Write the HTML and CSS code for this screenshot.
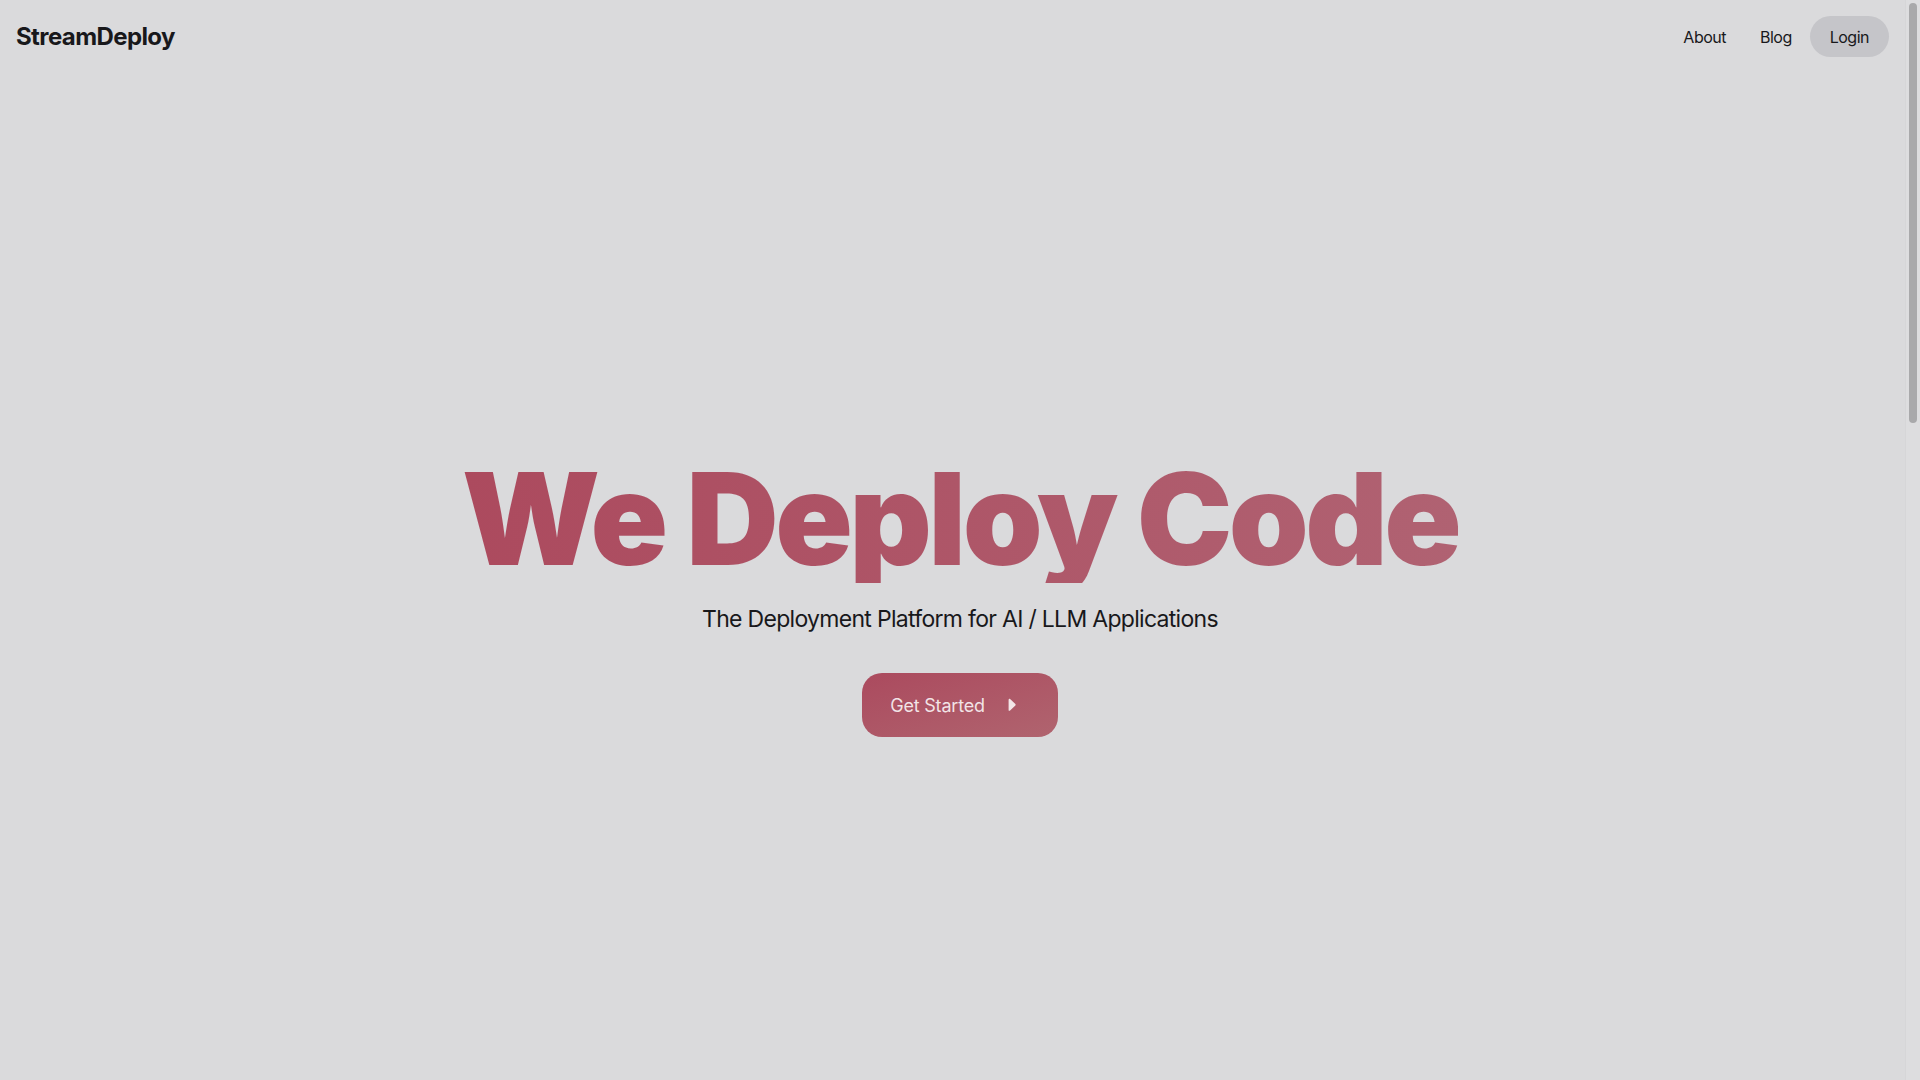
FILE: index.html
```html
<!DOCTYPE html>
<html lang="en">
<head>
<meta charset="utf-8">
<title>StreamDeploy</title>
<link rel="stylesheet" href="styles.css">
</head>
<body>
<div class="page">
  <header class="header">
    <a class="logo" href="#">StreamDeploy</a>
    <nav class="nav">
      <a class="nav-link" href="#">About</a>
      <a class="nav-link" href="#">Blog</a>
      <a class="nav-link login" href="#">Login</a>
    </nav>
  </header>
  <main class="hero">
    <h1 class="title">We Deploy Code</h1>
    <p class="subtitle">The Deployment Platform for AI / LLM Applications</p>
    <a class="cta" href="#">
      <span>Get Started</span>
      <svg class="cta-icon" width="24" height="24" viewBox="0 0 24 24" aria-hidden="true"><path d="M8.6 6.7c0-.8.9-1.2 1.5-.7l5.3 5.1c.4.4.4 1 0 1.4l-5.3 5.1c-.6.6-1.5.1-1.5-.7z" fill="currentColor"/></svg>
    </a>
  </main>
</div>
<div class="scrollbar"><div class="scrollbar-thumb"></div></div>
</body>
</html>
```

FILE: styles.css
```css
html {
  background: #dadadc;
}
body {
  margin: 0;
  font-family: Inter, "Noto Sans", sans-serif;
  color: #18181b;
  background: #dadadc;
}
.page {
  overflow: hidden;
  height: 100vh;
}
a {
  text-decoration: none;
  color: inherit;
}
.header {
  display: flex;
  justify-content: space-between;
  align-items: center;
  padding: 16px 31px 16px 16px;
  height: 41px;
}
.logo {
  font-size: 24px;
  font-weight: 700;
  letter-spacing: -0.6px;
  color: #18181b;
}
.nav {
  display: flex;
  align-items: center;
  gap: 2px;
}
.nav-link {
  font-size: 16px;
  line-height: 24px;
  letter-spacing: -0.5px;
  padding: 8px 16px;
  border-radius: 999px;
}
.login {
  background: #c5c5c9;
  padding: 8.5px 20px;
}
.hero {
  width: 100vw;
  display: flex;
  flex-direction: column;
  align-items: center;
  padding-top: 382px;
  box-sizing: border-box;
}
.title {
  margin: 0;
  font-size: 128px;
  line-height: 1;
  font-weight: 900;
  letter-spacing: -0.028em;
  background: linear-gradient(to right, #ac4a5e, #b06272);
  -webkit-background-clip: text;
  background-clip: text;
  color: transparent;
  white-space: nowrap;
}
.subtitle {
  margin: 20px 0 0;
  font-size: 23px;
  line-height: 32px;
  letter-spacing: -0.7px;
  color: #18181b;
}
.cta {
  margin-top: 38px;
  display: flex;
  align-items: center;
  gap: 15px;
  height: 64px;
  box-sizing: border-box;
  padding: 0 34px 0 28px;
  border-radius: 20px;
  background: linear-gradient(to bottom right, #ab4a5e, #b0646f);
  color: rgba(255, 255, 255, 0.85);
  font-size: 18px;
  letter-spacing: -0.2px;
}
.cta-icon {
  display: block;
}
.scrollbar {
  position: fixed;
  top: 0;
  right: 0;
  width: 14px;
  height: 100vh;
  background: #dddddf;
  border-left: 1px solid #d6d6d8;
}
.scrollbar-thumb {
  position: absolute;
  top: 3px;
  left: 3px;
  width: 8px;
  height: 420px;
  border-radius: 4px;
  background: #a9a9ab;
}
```
